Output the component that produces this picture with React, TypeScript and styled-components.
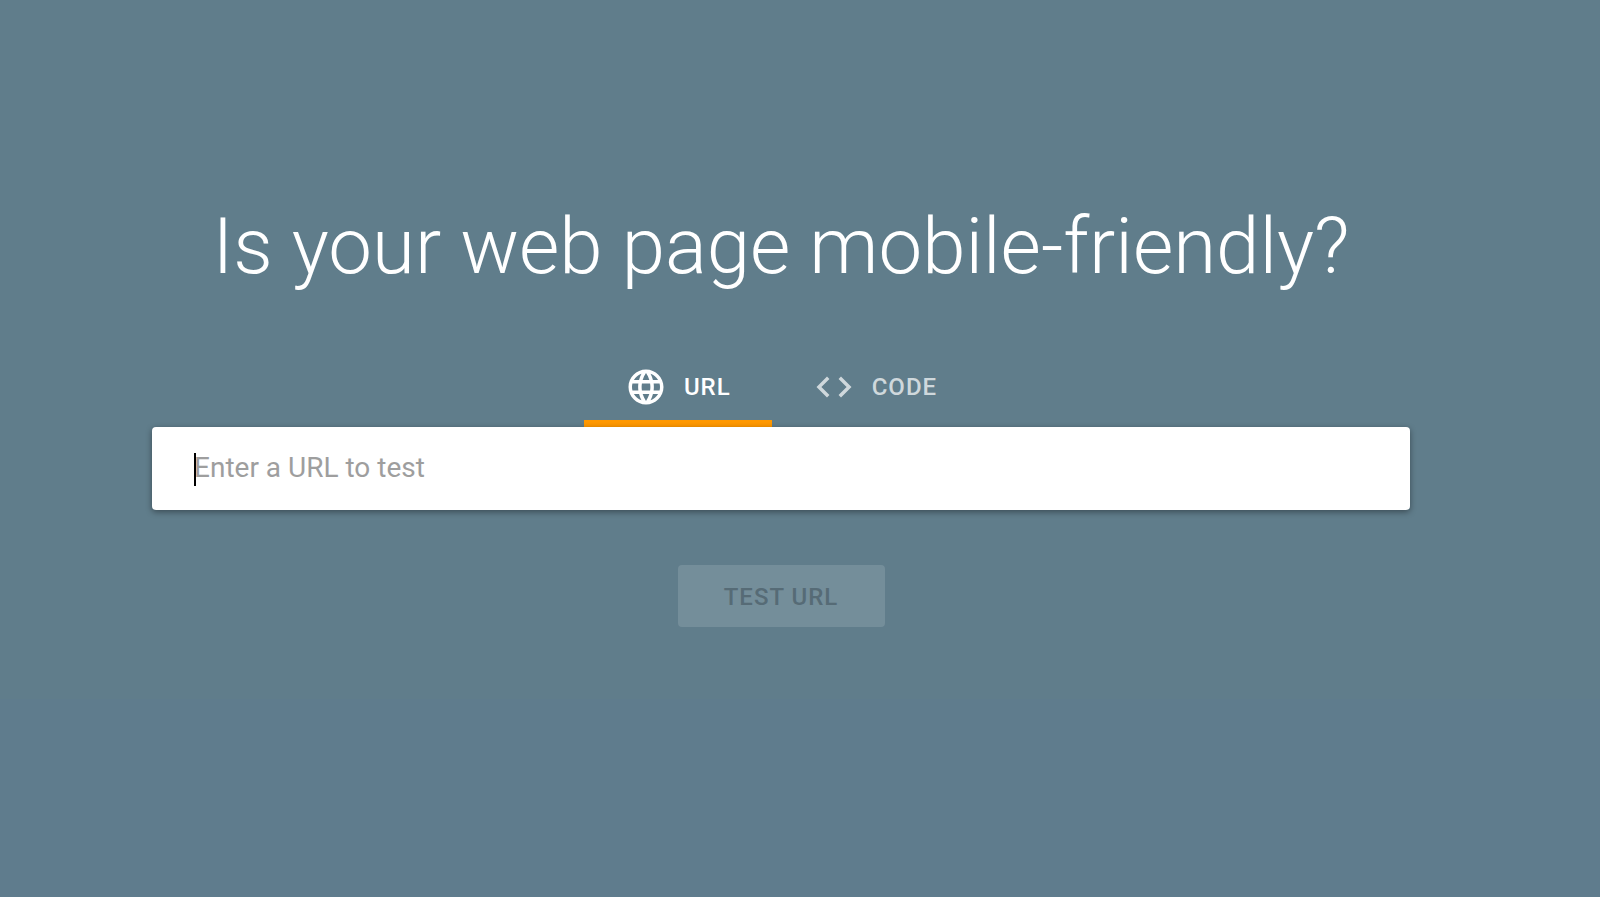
import React, { useState } from "react";
import styled, { createGlobalStyle } from "styled-components";

const GlobalStyle = createGlobalStyle`
  *, *::before, *::after { box-sizing: border-box; }
  body { margin: 0; background: #5f7c8d; font-family: Roboto, "Liberation Sans", sans-serif; }
`;

const Page = styled.div`
  min-height: 100vh;
  display: flex;
  flex-direction: column;
  background: #5f7c8d;
`;

const Hero = styled.main`
  display: flex;
  flex-direction: column;
  align-items: center;
  padding: 193px 190px 72px 152px;
  background: #607d8b;
`;

const Title = styled.h1`
  margin: 0;
  font-size: 78px;
  line-height: 108px;
  font-weight: 300;
  white-space: nowrap;
  color: #fff;
`;

const Tabs = styled.div`
  display: flex;
  margin-top: 46px;
`;

const Tab = styled.button<{ $active?: boolean }>`
  display: flex;
  align-items: center;
  justify-content: center;
  gap: 17px;
  height: 80px;
  padding: 6px 41px 0;
  border: 0;
  border-bottom: 7px solid ${(p) => (p.$active ? "#ff9800" : "transparent")};
  background: none;
  color: ${(p) => (p.$active ? "#fff" : "#cfd8dc")};
  font: 500 24px/32px Roboto, "Liberation Sans", sans-serif;
  letter-spacing: 1px;
`;

const TabIcon = styled.svg`
  width: 42px;
  height: 42px;
  fill: currentColor;
`;

const Form = styled.form`
  align-self: stretch;
  display: flex;
  flex-direction: column;
  align-items: center;
`;

const Field = styled.div`
  position: relative;
  width: 100%;
`;

const UrlInput = styled.input`
  display: block;
  width: 100%;
  height: 83px;
  padding: 0 42px 2px;
  border: 0;
  border-radius: 4px;
  outline: none;
  background: #fff;
  color: #212121;
  caret-color: #212121;
  font: 400 28px/36px Roboto, "Liberation Sans", sans-serif;
  box-shadow: 0 2px 6px rgba(0, 0, 0, 0.4);
  &::placeholder { color: #9e9e9e; opacity: 1; }
  &:placeholder-shown { caret-color: transparent; }
`;

const Caret = styled.span`
  position: absolute;
  top: 26px;
  left: 42px;
  width: 2px;
  height: 33px;
  background: #000;
  pointer-events: none;
`;

const SubmitButton = styled.button`
  width: 207px;
  height: 62px;
  margin-top: 55px;
  padding: 2px 0 0;
  border: 0;
  border-radius: 4px;
  background: #748e9a;
  color: #566b76;
  font: 500 24px/32px Roboto, "Liberation Sans", sans-serif;
  letter-spacing: 1px;
`;

export default function App() {
  const [url, setUrl] = useState("");
  return (
    <Page>
      <GlobalStyle />
      <Hero>
        <Title>Is your web page mobile-friendly?</Title>
        <Tabs role="tablist">
          <Tab type="button" role="tab" aria-selected="true" $active>
            <TabIcon viewBox="0 0 24 24" aria-hidden="true">
              <path d="M11.99 2C6.47 2 2 6.48 2 12s4.47 10 9.99 10C17.52 22 22 17.52 22 12S17.52 2 11.99 2zm6.93 6h-2.95c-.32-1.25-.78-2.45-1.38-3.56 1.84.63 3.37 1.91 4.33 3.56zM12 4.04c.83 1.2 1.48 2.53 1.91 3.96h-3.82c.43-1.43 1.08-2.76 1.91-3.96zM4.26 14C4.1 13.36 4 12.69 4 12s.1-1.36.26-2h3.38c-.08.66-.14 1.32-.14 2s.06 1.34.14 2H4.26zm.82 2h2.95c.32 1.25.78 2.45 1.38 3.56-1.84-.63-3.37-1.9-4.33-3.56zm2.95-8H5.08c.96-1.66 2.49-2.93 4.33-3.56C8.81 5.55 8.35 6.75 8.03 8zM12 19.96c-.83-1.2-1.48-2.53-1.91-3.96h3.82c-.43 1.43-1.08 2.76-1.91 3.96zM14.34 14H9.66c-.09-.66-.16-1.32-.16-2s.07-1.35.16-2h4.68c.09.65.16 1.32.16 2s-.07 1.34-.16 2zm.25 5.56c.6-1.11 1.06-2.31 1.38-3.56h2.95c-.96 1.65-2.49 2.93-4.33 3.56zM16.36 14c.08-.66.14-1.32.14-2s-.06-1.34-.14-2h3.38c.16.64.26 1.31.26 2s-.1 1.36-.26 2h-3.38z" />
            </TabIcon>
            URL
          </Tab>
          <Tab type="button" role="tab" aria-selected="false">
            <TabIcon viewBox="0 0 24 24" aria-hidden="true">
              <path d="M9.4 16.6L4.8 12l4.6-4.6L8 6l-6 6 6 6 1.4-1.4zm5.2 0l4.6-4.6-4.6-4.6L16 6l6 6-6 6-1.4-1.4z" />
            </TabIcon>
            CODE
          </Tab>
        </Tabs>
        <Form onSubmit={(e) => e.preventDefault()}>
          <Field>
            <UrlInput
              type="url"
              placeholder="Enter a URL to test"
              aria-label="Enter a URL to test"
              value={url}
              onChange={(e) => setUrl(e.target.value)}
              autoFocus
            />
            {url === "" && <Caret aria-hidden="true" />}
          </Field>
          <SubmitButton type="submit" disabled={url === ""}>TEST URL</SubmitButton>
        </Form>
      </Hero>
    </Page>
  );
}
